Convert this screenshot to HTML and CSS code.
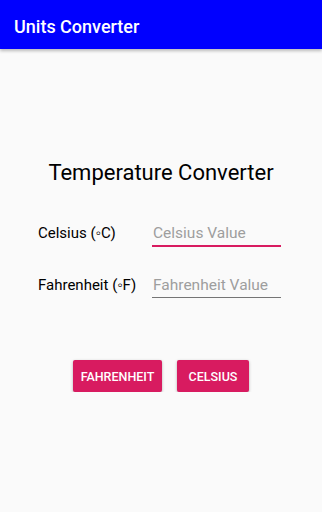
FILE: index.html
```html
<!DOCTYPE html>
<html>
<head>
<meta charset="utf-8">
<link rel="stylesheet" href="styles.css">
</head>
<body>
<header class="appbar">Units Converter</header>
<main class="content">
  <h1 class="title">Temperature Converter</h1>
  <div class="form">
    <div class="row">
      <span class="label">Celsius (◦C)</span>
      <div class="field focused"><span class="hint">Celsius Value</span></div>
    </div>
    <div class="row">
      <span class="label">Fahrenheit (◦F)</span>
      <div class="field"><span class="hint">Fahrenheit Value</span></div>
    </div>
  </div>
  <div class="buttons">
    <button class="btn btn-f">FAHRENHEIT</button>
    <button class="btn btn-c">CELSIUS</button>
  </div>
</main>
</body>
</html>
```
FILE: styles.css
```css
html, body {
  margin: 0;
  padding: 0;
  background: #fafafa;
  font-family: Roboto, "Liberation Sans", sans-serif;
}
.appbar {
  height: 49px;
  box-sizing: border-box;
  background: #0000ff;
  color: #ffffff;
  font-size: 18px;
  font-weight: 500;
  display: flex;
  align-items: center;
  padding: 3px 0 0 14px;
  box-shadow: 0 2px 3px rgba(0,0,0,0.25);
  position: relative;
}
.content {
  display: flex;
  flex-direction: column;
}
.title {
  margin: 108px 0 0 0;
  font-size: 22px;
  font-weight: 400;
  line-height: 32px;
  color: #000000;
  text-align: center;
}
.form {
  display: flex;
  flex-direction: column;
  gap: 28px;
  margin-top: 34px;
}
.row {
  display: grid;
  grid-template-columns: 114px 129px;
  padding-left: 38px;
  align-items: start;
}
.label {
  font-size: 15px;
  color: #000000;
  line-height: 20px;
}
.field {
  border-bottom: 1px solid #757575;
  padding-bottom: 2px;
}
.field.focused {
  border-bottom: 2px solid #d81b60;
}
.hint {
  display: block;
  font-size: 15.5px;
  line-height: 20px;
  color: #9e9e9e;
  padding-left: 1px;
}
.buttons {
  display: flex;
  justify-content: center;
  gap: 15px;
  margin-top: 62px;
}
.btn {
  height: 32px;
  border: none;
  border-radius: 2px;
  background: #d81b60;
  color: #ffffff;
  font-family: Roboto, "Liberation Sans", sans-serif;
  font-size: 12.5px;
  font-weight: 500;
  padding: 0;
  box-shadow: 0 1px 3px rgba(0,0,0,0.3);
}
.btn-f { width: 89px; }
.btn-c { width: 72px; }
```
